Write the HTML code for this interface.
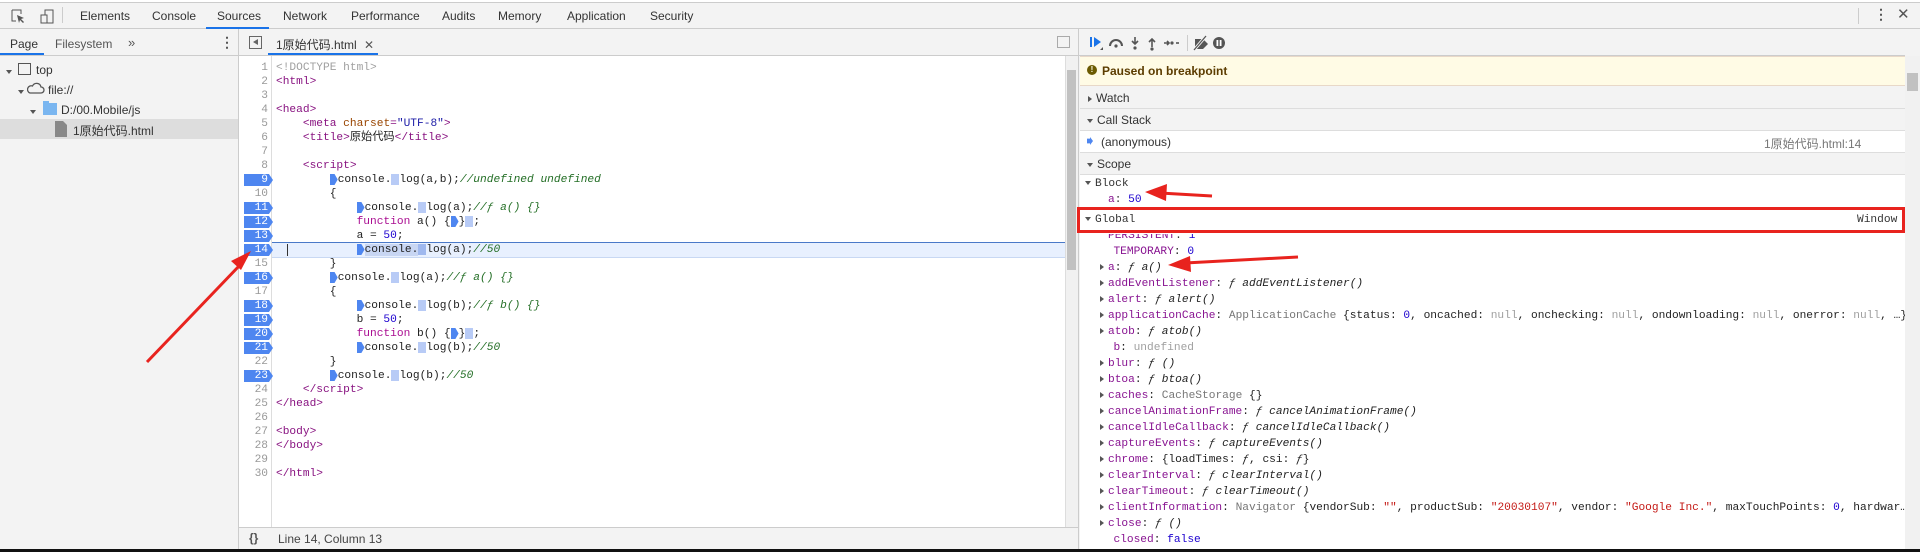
<!DOCTYPE html>
<html><head><meta charset="utf-8"><style>
*{box-sizing:border-box;margin:0;padding:0}
body{width:1920px;height:552px;overflow:hidden;background:#f3f3f3;font-family:"Liberation Sans","Noto Sans CJK SC",sans-serif;font-size:12px;color:#333;position:relative}
.a{position:absolute;white-space:nowrap}
pre.a{white-space:pre}
.mono{font-family:"Liberation Mono","Noto Sans CJK SC",monospace;font-size:11.2px}
.tag{color:#881280}.attr{color:#994500}.str{color:#1a1aa6}.cm{color:#236e25;font-style:italic}.kw{color:#aa0d91}.num{color:#1c00cf}.gr{color:#a0a0a0}
.bp{position:absolute;left:244px;width:29px;height:12px;background:#4e86f0;color:#fff;text-align:right;padding-right:5px;clip-path:polygon(0 0,86% 0,100% 50%,86% 100%,0 100%)}
.ln{position:absolute;left:240px;width:28px;text-align:right;color:#999}
.prop{color:#881391}.fn{font-style:italic;color:#222}
.tri{display:inline-block;width:0;height:0;border-left:4px solid #555;border-top:3.5px solid transparent;border-bottom:3.5px solid transparent;margin-right:4px;vertical-align:0}
.trid{display:inline-block;width:0;height:0;border-top:4px solid #555;border-left:3.5px solid transparent;border-right:3.5px solid transparent;margin-right:4px;vertical-align:1px}
.mk{display:inline-block;width:8px;height:11px;background:#4e86f0;clip-path:polygon(0 0,60% 0,100% 50%,60% 100%,0 100%);vertical-align:top;margin-top:1px}
.mk2{display:inline-block;width:8px;height:11px;background:#b8cbf6;vertical-align:top;margin-top:1px}
.code>div,.rl>div{height:14px;line-height:14px;white-space:pre}
.rl>div{height:16px;line-height:16px}
</style></head><body>
<div class="a" style="left:0;top:0;width:1920px;height:2px;background:#fff"></div>
<div class="a" style="left:0;top:2px;width:1920px;height:27px;background:#f3f3f3;border-top:1px solid #ccc;border-bottom:1px solid #ccc"></div>
<svg class="a" style="left:10px;top:8px" width="44" height="16"><path d="M2 2h9v4M2 2v11h4" stroke="#555" fill="none"/><path d="M7 7l7 3-3 1 3 3-1 1-3-3-1 3z" fill="#555"/><rect x="35" y="2" width="8" height="13" stroke="#555" fill="none"/><rect x="31" y="7" width="6" height="8" stroke="#555" fill="#f3f3f3"/></svg>
<div class="a" style="left:62px;top:7px;width:1px;height:16px;background:#ccc"></div>
<div class="a" style="left:80px;top:9px;color:#333">Elements</div>
<div class="a" style="left:152px;top:9px">Console</div>
<div class="a" style="left:217px;top:9px">Sources</div>
<div class="a" style="left:206px;top:27px;width:63px;height:2px;background:#1a73e8"></div>
<div class="a" style="left:283px;top:9px">Network</div>
<div class="a" style="left:351px;top:9px">Performance</div>
<div class="a" style="left:442px;top:9px">Audits</div>
<div class="a" style="left:498px;top:9px">Memory</div>
<div class="a" style="left:567px;top:9px">Application</div>
<div class="a" style="left:650px;top:9px">Security</div>
<div class="a" style="left:1858px;top:8px;width:1px;height:16px;background:#ccc"></div>
<div class="a" style="left:1874px;top:6px;font-size:14px;font-weight:bold;color:#555">⋮</div>
<div class="a" style="left:1897px;top:5px;font-size:15px;color:#555">✕</div>
<div class="a" style="left:0;top:29px;width:239px;height:523px;background:#f3f3f3;border-right:1px solid #ccc"></div>
<div class="a" style="left:0;top:29px;width:239px;height:27px;border-bottom:1px solid #ccc"></div>
<div class="a" style="left:10px;top:37px">Page</div>
<div class="a" style="left:0;top:53px;width:44px;height:2px;background:#1a73e8"></div>
<div class="a" style="left:55px;top:37px;color:#555">Filesystem</div>
<div class="a" style="left:128px;top:35px;font-size:13px;color:#555">»</div>
<div class="a" style="left:220px;top:34px;font-size:14px;font-weight:bold;color:#555">⋮</div>
<div class="a" style="left:0;top:119px;width:238px;height:20px;background:#ddd"></div>
<div class="a" style="left:6px;top:64px"><span class="trid"></span></div>
<div class="a" style="left:18px;top:63px;width:13px;height:12px;border:1.5px solid #555"></div>
<div class="a" style="left:36px;top:63px">top</div>
<div class="a" style="left:18px;top:84px"><span class="trid"></span></div>
<svg class="a" style="left:27px;top:82px" width="18" height="13"><path d="M3 11h11a3 3 0 0 0 0-6 4.5 4.5 0 0 0-8.5-1A3.5 3.5 0 0 0 3 11z" stroke="#555" fill="none" stroke-width="1.3"/></svg>
<div class="a" style="left:48px;top:83px">file://</div>
<div class="a" style="left:30px;top:104px"><span class="trid"></span></div>
<div class="a" style="left:43px;top:103px;width:14px;height:12px;background:#7ab6f0"></div>
<div class="a" style="left:43px;top:101px;width:6px;height:3px;background:#7ab6f0"></div>
<div class="a" style="left:61px;top:103px">D:/00.Mobile/js</div>
<svg class="a" style="left:55px;top:121px" width="12" height="16"><path d="M0 0h8l4 4v12H0z" fill="#888"/></svg>
<div class="a" style="left:73px;top:122px">1原始代码.html</div>
<div class="a" style="left:239px;top:29px;width:839px;height:27px;background:#f3f3f3;border-bottom:1px solid #ccc"></div>
<div class="a" style="left:249px;top:36px;width:13px;height:13px;border:1px solid #666"></div>
<div class="a" style="left:253px;top:39px;width:0;height:0;border-right:5px solid #666;border-top:3.5px solid transparent;border-bottom:3.5px solid transparent"></div>
<div class="a" style="left:276px;top:36px">1原始代码.html <span style="color:#555;margin-left:4px">✕</span></div>
<div class="a" style="left:268px;top:53px;width:110px;height:2px;background:#1a73e8"></div>
<div class="a" style="left:1057px;top:36px;width:13px;height:12px;border:1px solid #aaa"></div>
<div class="a" style="left:239px;top:56px;width:826px;height:471px;background:#fff"></div>
<div class="a" style="left:271px;top:56px;width:1px;height:471px;background:#ddd"></div>
<div class="a" style="left:1065px;top:56px;width:13px;height:471px;background:#f1f1f1;border-left:1px solid #ddd"></div>
<div class="a" style="left:1067px;top:70px;width:9px;height:200px;background:#c1c1c1"></div>
<div class="a" style="left:272px;top:242px;width:793px;height:16px;background:#e8f0fe;border-top:1px solid #4a79c8;border-bottom:1px solid #c8d8f3"></div>
<div class="a" style="left:287px;top:244px;width:1px;height:12px;background:#333"></div>
<div class="a mono" style="left:0;top:61px;line-height:14px">
<div class="ln" style="top:0">1</div><div class="ln" style="top:14px">2</div><div class="ln" style="top:28px">3</div><div class="ln" style="top:42px">4</div><div class="ln" style="top:56px">5</div><div class="ln" style="top:70px">6</div><div class="ln" style="top:84px">7</div><div class="ln" style="top:98px">8</div>
<div class="bp" style="top:113px;line-height:12px">9</div><div class="ln" style="top:126px">10</div>
<div class="bp" style="top:141px;line-height:12px">11</div><div class="bp" style="top:155px;line-height:12px">12</div><div class="bp" style="top:169px;line-height:12px">13</div><div class="bp" style="top:183px;line-height:12px">14</div>
<div class="ln" style="top:196px">15</div><div class="bp" style="top:211px;line-height:12px">16</div><div class="ln" style="top:224px">17</div>
<div class="bp" style="top:239px;line-height:12px">18</div><div class="bp" style="top:253px;line-height:12px">19</div><div class="bp" style="top:267px;line-height:12px">20</div><div class="bp" style="top:281px;line-height:12px">21</div>
<div class="ln" style="top:294px">22</div><div class="bp" style="top:309px;line-height:12px">23</div>
<div class="ln" style="top:322px">24</div><div class="ln" style="top:336px">25</div><div class="ln" style="top:350px">26</div><div class="ln" style="top:364px">27</div><div class="ln" style="top:378px">28</div><div class="ln" style="top:392px">29</div><div class="ln" style="top:406px">30</div>
</div>
<div class="a mono code" style="left:276px;top:61px;color:#222">
<div><span class="gr">&lt;!DOCTYPE html&gt;</span></div>
<div><span class="tag">&lt;html&gt;</span></div>
<div></div>
<div><span class="tag">&lt;head&gt;</span></div>
<div>    <span class="tag">&lt;meta <span class="attr">charset</span>=<span class="str">"UTF-8"</span>&gt;</span></div>
<div>    <span class="tag">&lt;title&gt;</span>原始代码<span class="tag">&lt;/title&gt;</span></div>
<div></div>
<div>    <span class="tag">&lt;script&gt;</span></div>
<div>        <span class="mk"></span>console.<span class="mk2"></span>log(a,b);<span class="cm">//undefined undefined</span></div>
<div>        {</div>
<div>            <span class="mk"></span>console.<span class="mk2"></span>log(a);<span class="cm">//ƒ a() {}</span></div>
<div>            <span class="kw">function</span> a() {<span class="mk"></span>}<span class="mk2"></span>;</div>
<div>            a = <span class="num">50</span>;</div>
<div>            <span class="mk"></span><span style="background:#c8d6f3">console.</span><span class="mk2" style="background:#9fb8ee"></span>log(a);<span class="cm">//50</span></div>
<div>        }</div>
<div>        <span class="mk"></span>console.<span class="mk2"></span>log(a);<span class="cm">//ƒ a() {}</span></div>
<div>        {</div>
<div>            <span class="mk"></span>console.<span class="mk2"></span>log(b);<span class="cm">//ƒ b() {}</span></div>
<div>            b = <span class="num">50</span>;</div>
<div>            <span class="kw">function</span> b() {<span class="mk"></span>}<span class="mk2"></span>;</div>
<div>            <span class="mk"></span>console.<span class="mk2"></span>log(b);<span class="cm">//50</span></div>
<div>        }</div>
<div>        <span class="mk"></span>console.<span class="mk2"></span>log(b);<span class="cm">//50</span></div>
<div>    <span class="tag">&lt;/script&gt;</span></div>
<div><span class="tag">&lt;/head&gt;</span></div>
<div></div>
<div><span class="tag">&lt;body&gt;</span></div>
<div><span class="tag">&lt;/body&gt;</span></div>
<div></div>
<div><span class="tag">&lt;/html&gt;</span></div>
</div>
<div class="a" style="left:239px;top:527px;width:839px;height:22px;background:#f3f3f3;border-top:1px solid #ccc"></div>
<div class="a" style="left:249px;top:531px;font-weight:bold;color:#555">{}</div>
<div class="a" style="left:278px;top:532px;color:#444">Line 14, Column 13</div>
<div class="a" style="left:1078px;top:29px;width:842px;height:523px;background:#f3f3f3;border-left:1px solid #ccc"></div>
<div class="a" style="left:1078px;top:55px;width:827px;height:1px;background:#ccc"></div>
<svg class="a" style="left:1088px;top:34px" width="200" height="18">
<rect x="2" y="3" width="2" height="10" fill="#1a73e8"/><path d="M6 3l7 5-7 5z" fill="#1a73e8"/><path d="M12 16l3-3v3z" fill="#555"/>
<path d="M22 12a6 6 0 0 1 12 0" stroke="#555" stroke-width="2" fill="none"/><circle cx="28" cy="12" r="1.6" fill="#555"/>
<path d="M47 3v6M44 7l3 3 3-3" stroke="#555" stroke-width="1.6" fill="none"/><circle cx="47" cy="14" r="1.6" fill="#555"/>
<path d="M64 13V6M61 8l3-3 3 3" stroke="#555" stroke-width="1.6" fill="none"/><circle cx="64" cy="15" r="1.6" fill="#555"/>
<path d="M76 9h5M79 7l2 2-2 2" stroke="#555" stroke-width="1.6" fill="none"/><circle cx="84" cy="9" r="1.6" fill="#555"/><path d="M91 9h-3" stroke="#555" stroke-width="1.6"/>
<rect x="99" y="1" width="1" height="16" fill="#ccc"/>
<path d="M107 5h8l5 5-5 5h-8z" fill="#555"/><path d="M106 16l12-14" stroke="#f3f3f3" stroke-width="3"/><path d="M106 16l12-14" stroke="#555" stroke-width="1.3"/>
<circle cx="131" cy="9" r="6" fill="#555"/><rect x="128.5" y="6" width="1.8" height="6" fill="#fff"/><rect x="131.7" y="6" width="1.8" height="6" fill="#fff"/>
</svg>
<div class="a" style="left:1080px;top:56px;width:825px;height:30px;background:#fffbe5;border-bottom:1px solid #e8d8c8;border-top:1px solid #e8d8c8"></div>
<div class="a" style="left:1087px;top:65px;width:10px;height:10px;border-radius:50%;background:#6b5a00;color:#fffbe5;font-size:8px;font-weight:bold;text-align:center;line-height:10px">!</div>
<div class="a" style="left:1102px;top:64px;color:#5c3c00;font-weight:bold">Paused on breakpoint</div>
<div class="a" style="left:1080px;top:86px;width:825px;height:23px;border-bottom:1px solid #ddd"></div>
<div class="a" style="left:1088px;top:91px"><span class="tri"></span>Watch</div>
<div class="a" style="left:1080px;top:109px;width:825px;height:22px;border-bottom:1px solid #ddd"></div>
<div class="a" style="left:1087px;top:113px"><span class="trid"></span>Call Stack</div>
<div class="a" style="left:1080px;top:131px;width:825px;height:22px;background:#fff;border-bottom:1px solid #ddd"></div>
<div class="a" style="left:1087px;top:137px;width:6px;height:8px;background:#4e86f0;clip-path:polygon(0 20%,50% 20%,50% 0,100% 50%,50% 100%,50% 80%,0 80%)"></div>
<div class="a" style="left:1101px;top:135px">(anonymous)</div>
<div class="a" style="left:1764px;top:135px;color:#777">1原始代码.html:14</div>
<div class="a" style="left:1080px;top:153px;width:825px;height:22px;border-bottom:1px solid #ddd"></div>
<div class="a" style="left:1087px;top:157px"><span class="trid"></span>Scope</div>
<div class="a" style="left:1080px;top:175px;width:825px;height:377px;background:#fff"></div>
<div class="a mono" style="left:1085px;top:176px;line-height:16px"><span class="trid"></span>Block</div>
<div class="a mono" style="left:1108px;top:192px;line-height:16px"><span class="prop">a</span>: <span class="num">50</span></div>
<div class="a mono" style="left:1085px;top:212px;line-height:16px"><span class="trid"></span>Global</div>
<div class="a mono" style="left:1857px;top:212px;line-height:16px">Window</div>
<div class="a mono" style="left:1108px;top:228px;line-height:16px;clip-path:inset(6px 0 0 0)"><span class="prop">PERSISTENT</span>: <span class="num">1</span></div>
<div class="a mono rl" style="left:1100px;top:244px;color:#222">
<div>  <span class="prop">TEMPORARY</span>: <span class="num">0</span></div>
<div><span class="tri"></span><span class="prop">a</span>: <span class="fn">ƒ a()</span></div>
<div><span class="tri"></span><span class="prop">addEventListener</span>: <span class="fn">ƒ addEventListener()</span></div>
<div><span class="tri"></span><span class="prop">alert</span>: <span class="fn">ƒ alert()</span></div>
<div><span class="tri"></span><span class="prop">applicationCache</span>: <span style="color:#777">ApplicationCache</span> {status: <span class="num">0</span>, oncached: <span class="gr">null</span>, onchecking: <span class="gr">null</span>, ondownloading: <span class="gr">null</span>, onerror: <span class="gr">null</span>, …}</div>
<div><span class="tri"></span><span class="prop">atob</span>: <span class="fn">ƒ atob()</span></div>
<div>  <span class="prop">b</span>: <span class="gr">undefined</span></div>
<div><span class="tri"></span><span class="prop">blur</span>: <span class="fn">ƒ ()</span></div>
<div><span class="tri"></span><span class="prop">btoa</span>: <span class="fn">ƒ btoa()</span></div>
<div><span class="tri"></span><span class="prop">caches</span>: <span style="color:#777">CacheStorage</span> {}</div>
<div><span class="tri"></span><span class="prop">cancelAnimationFrame</span>: <span class="fn">ƒ cancelAnimationFrame()</span></div>
<div><span class="tri"></span><span class="prop">cancelIdleCallback</span>: <span class="fn">ƒ cancelIdleCallback()</span></div>
<div><span class="tri"></span><span class="prop">captureEvents</span>: <span class="fn">ƒ captureEvents()</span></div>
<div><span class="tri"></span><span class="prop">chrome</span>: {loadTimes: <span class="fn">ƒ</span>, csi: <span class="fn">ƒ</span>}</div>
<div><span class="tri"></span><span class="prop">clearInterval</span>: <span class="fn">ƒ clearInterval()</span></div>
<div><span class="tri"></span><span class="prop">clearTimeout</span>: <span class="fn">ƒ clearTimeout()</span></div>
<div><span class="tri"></span><span class="prop">clientInformation</span>: <span style="color:#777">Navigator</span> {vendorSub: <span style="color:#c41a16">""</span>, productSub: <span style="color:#c41a16">"20030107"</span>, vendor: <span style="color:#c41a16">"Google Inc."</span>, maxTouchPoints: <span class="num">0</span>, hardwar…</div>
<div><span class="tri"></span><span class="prop">close</span>: <span class="fn">ƒ ()</span></div>
<div>  <span class="prop">closed</span>: <span class="num">false</span></div>
</div>
<div class="a" style="left:1905px;top:56px;width:15px;height:496px;background:#f1f1f1"></div>
<div class="a" style="left:1907px;top:73px;width:11px;height:18px;background:#c1c1c1"></div>
<div class="a" style="left:0;top:549px;width:1920px;height:3px;background:#111"></div>
<div class="a" style="left:1077px;top:207px;width:828px;height:26px;border:3px solid #e8231e"></div>
<svg class="a" style="left:0;top:0" width="1920" height="552">
<path d="M147 362L240 265" stroke="#e8231e" stroke-width="3"/><path d="M251 251l-20 10 10 9z" fill="#e8231e"/>
<path d="M1212 196L1160 193" stroke="#e8231e" stroke-width="3"/><path d="M1145 192l22-8-1 17z" fill="#e8231e"/>
<path d="M1298 257L1185 263" stroke="#e8231e" stroke-width="3"/><path d="M1168 265l22-9 1 16z" fill="#e8231e"/>
</svg>
</body></html>
